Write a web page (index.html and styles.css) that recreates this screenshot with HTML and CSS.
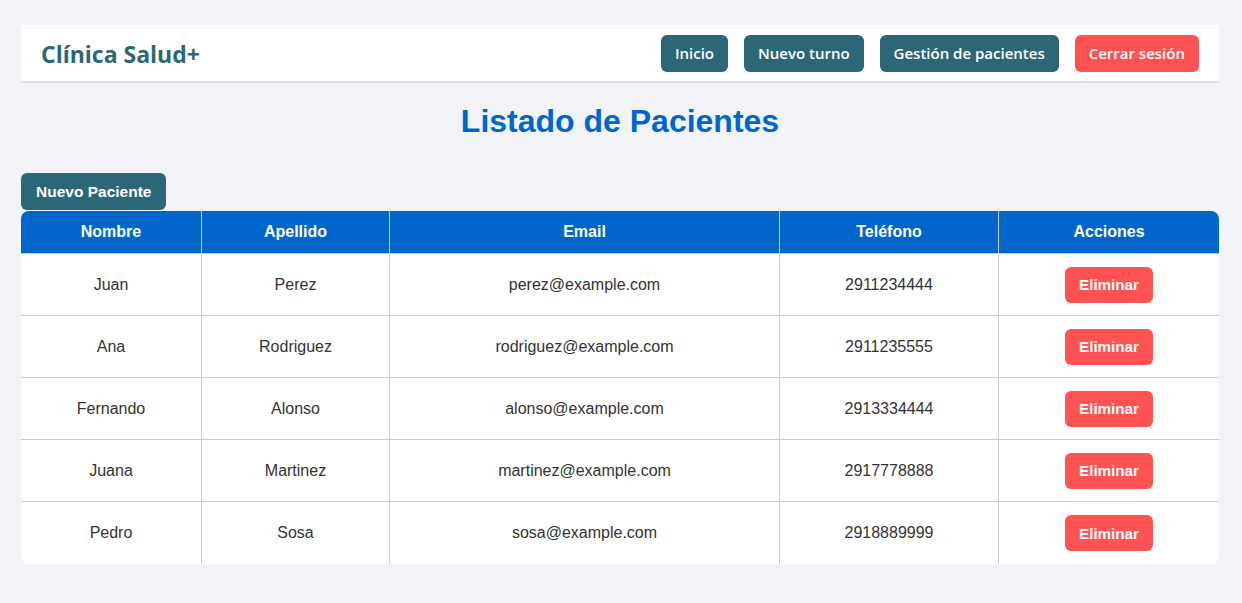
FILE: index.html
```html
<!DOCTYPE html>
<html lang="es">
<head>
<meta charset="utf-8">
<title>Listado de Pacientes</title>
<link rel="stylesheet" href="styles.css">
</head>
<body>
<div class="page">
  <header class="topbar">
    <div class="brand">Clínica Salud+</div>
    <nav class="nav">
      <a class="nav-btn">Inicio</a>
      <a class="nav-btn">Nuevo turno</a>
      <a class="nav-btn">Gestión de pacientes</a>
      <a class="nav-btn nav-btn-danger">Cerrar sesión</a>
    </nav>
  </header>

  <h1 class="title">Listado de Pacientes</h1>

  <div class="actions">
    <button class="btn-new">Nuevo Paciente</button>
  </div>

  <div class="table-wrap">
    <table class="patients">
      <thead>
        <tr><th>Nombre</th><th>Apellido</th><th>Email</th><th>Teléfono</th><th>Acciones</th></tr>
      </thead>
      <tbody>
        <tr><td>Juan</td><td>Perez</td><td>perez@example.com</td><td>2911234444</td><td><button class="btn-del">Eliminar</button></td></tr>
        <tr><td>Ana</td><td>Rodriguez</td><td>rodriguez@example.com</td><td>2911235555</td><td><button class="btn-del">Eliminar</button></td></tr>
        <tr><td>Fernando</td><td>Alonso</td><td>alonso@example.com</td><td>2913334444</td><td><button class="btn-del">Eliminar</button></td></tr>
        <tr><td>Juana</td><td>Martinez</td><td>martinez@example.com</td><td>2917778888</td><td><button class="btn-del">Eliminar</button></td></tr>
        <tr><td>Pedro</td><td>Sosa</td><td>sosa@example.com</td><td>2918889999</td><td><button class="btn-del">Eliminar</button></td></tr>
      </tbody>
    </table>
  </div>
</div>
</body>
</html>
```

FILE: styles.css
```css
* { box-sizing: border-box; }

html, body {
  margin: 0;
  padding: 0;
  background: #f2f3f7;
}

body {
  font-family: "Liberation Sans", Arial, sans-serif;
  color: #333;
}

.page {
  width: 1198px;
  margin: 0 0 0 21px;
  padding-top: 25px;
}

.topbar {
  display: flex;
  align-items: center;
  justify-content: space-between;
  height: 58px;
  padding: 0 20px;
  background: #fff;
  border-bottom: 2px solid #dedfe3;
}

.brand {
  font-family: "Open Sans", "Lato", sans-serif;
  font-weight: 700;
  font-size: 23px;
  color: #2c6777;
  margin-top: 1px;
}

.nav {
  display: flex;
  gap: 16px;
  margin-top: 1px;
}

.nav-btn {
  display: inline-block;
  height: 37px;
  line-height: 37px;
  padding: 0 14px;
  border-radius: 6px;
  background: #2c6777;
  color: #fff;
  font-family: "Open Sans", "Lato", sans-serif;
  font-weight: 600;
  font-size: 15px;
  text-decoration: none;
}

.nav-btn-danger {
  background: #ff5252;
}

.title {
  margin: 20px 0 33px;
  text-align: center;
  font-size: 32px;
  line-height: 37px;
  font-weight: 700;
  color: #0066cc;
}

.actions {
  display: flex;
}

.btn-new {
  height: 37px;
  padding: 0 15px;
  border: none;
  border-radius: 6px;
  background: #2c6777;
  color: #fff;
  font-family: "Liberation Sans", Arial, sans-serif;
  font-weight: 700;
  font-size: 15.5px;
}

.table-wrap {
  margin-top: 1px;
  background: #fff;
  border-radius: 8px;
  overflow: hidden;
}

.patients {
  width: 100%;
  border-collapse: separate;
  border-spacing: 0;
  font-size: 16px;
}

.patients th,
.patients td {
  text-align: center;
  border-right: 1px solid #cccccc;
  border-bottom: 1px solid #cccccc;
}

.patients th:last-child,
.patients td:last-child {
  border-right: none;
}

.patients tbody tr:last-child td {
  border-bottom: none;
}

.patients th {
  height: 43px;
  padding: 0 12px;
  background: #0066cc;
  color: #fff;
  font-weight: 700;
}

.patients td {
  height: 62px;
  padding: 0 12px;
  color: #333;
}

.patients th:nth-child(1) { width: 181px; }
.patients th:nth-child(2) { width: 188px; }
.patients th:nth-child(3) { width: 390px; }
.patients th:nth-child(4) { width: 219px; }
.patients th:nth-child(5) { width: 220px; }

.btn-del {
  display: inline-block;
  vertical-align: middle;
  height: 36px;
  padding: 0 14px;
  border: none;
  border-radius: 6px;
  background: #ff5252;
  color: #fff;
  font-family: "Liberation Sans", Arial, sans-serif;
  font-weight: 700;
  font-size: 15.2px;
}
```
